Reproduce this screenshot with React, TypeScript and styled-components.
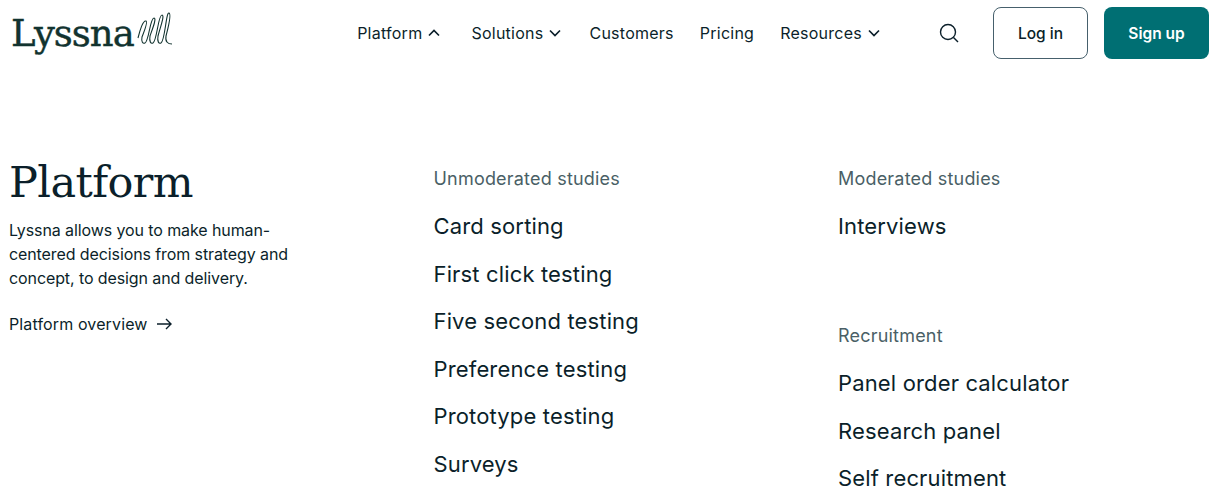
import React from "react";
import styled, { createGlobalStyle } from "styled-components";

const GlobalStyle = createGlobalStyle`
    html, body {
        margin: 0;
        padding: 0;
        height: 503px;
        overflow: hidden;
        background: #fff;
        font-family: "Inter", "Liberation Sans", sans-serif;
        color: #0b1f2a;
    }
`;

const Header = styled.header`
    height: 66px;
    display: flex;
    align-items: center;
    padding: 0 5px 0 11px;
`;

const Logo = styled.a`
    display: flex;
    align-items: center;
    width: 160px;
    color: #12332f;
    font-family: "DejaVu Serif", serif;
    font-size: 37px;
    letter-spacing: -1px;
    line-height: 1;
    -webkit-text-stroke: 0.4px #12332f;
    svg {
        margin-left: 2px;
        margin-top: -10px;
        flex: none;
    }
`;

const Nav = styled.nav`
    margin-left: auto;
    display: flex;
    align-items: center;
    gap: 26px;
`;

const NavItem = styled.a`
    display: flex;
    align-items: center;
    gap: 6px;
    font-size: 16px;
    letter-spacing: 0.25px;
    color: #0b1f2a;
    svg {
        margin-right: 2px;
    }
    &:first-child {
        margin-right: 3px;
    }
`;

const SearchButton = styled.button`
    border: 0;
    background: none;
    padding: 0;
    margin-left: 57px;
    display: flex;
    color: #0b1f2a;
`;

const Actions = styled.div`
    display: flex;
    gap: 16px;
    margin-left: 34px;
`;

const Button = styled.button<{ $primary?: boolean }>`
    height: 52px;
    border-radius: 8px;
    font-family: inherit;
    font-size: 15.5px;
    font-weight: ${(props) => (props.$primary ? 600 : 500)};
    width: ${(props) => (props.$primary ? "105px" : "95px")};
    color: ${(props) => (props.$primary ? "#fff" : "#0b1f2a")};
    background: ${(props) => (props.$primary ? "#006f73" : "#fff")};
    border: ${(props) => (props.$primary ? "0" : "1px solid #46606c")};
`;

const Main = styled.main`
    display: grid;
    grid-template-columns: 424.5px 404.5px 1fr;
    padding: 90px 0 0 9px;
`;

const Intro = styled.section`
    display: flex;
    flex-direction: column;
`;

const Title = styled.h1`
    margin: 0;
    font-family: "DejaVu Serif", serif;
    font-weight: 400;
    font-size: 43px;
    line-height: 52px;
    letter-spacing: -0.6px;
`;

const Lead = styled.p`
    margin: 10px 0 0;
    width: 290px;
    font-size: 16px;
    line-height: 24px;
    letter-spacing: -0.1px;
`;

const Overview = styled.a`
    margin-top: 22px;
    display: flex;
    align-items: center;
    gap: 9px;
    font-size: 16px;
    line-height: 24px;
    letter-spacing: 0.13px;
`;

const Column = styled.section`
    display: flex;
    flex-direction: column;
`;

const Group = styled.div`
    display: flex;
    flex-direction: column;
    & + & {
        margin-top: 62.5px;
    }
`;

const GroupTitle = styled.h2`
    margin: 11px 0 12px;
    font-size: 18px;
    font-weight: 400;
    line-height: 24px;
    letter-spacing: 0.2px;
    color: #4a5f66;
`;

const MenuLink = styled.a`
    font-size: 22px;
    line-height: 47.5px;
    letter-spacing: 0.15px;
    color: #0b1f2a;
`;

const Chevron = ({ up }: { up?: boolean }) => (
    <svg width="12" height="8" viewBox="0 0 12 8" fill="none" stroke="currentColor" strokeWidth="1.7">
        <path d={up ? "M1 6.5 6 1.5 11 6.5" : "M1 1.5 6 6.5 11 1.5"} />
    </svg>
);

const Squiggle = () => (
    <svg width="38" height="40" viewBox="4 0 38 40" fill="none" stroke="#12332f" strokeWidth="1.1">
        <path d="M6 30C8 22 11 12 14 13C16 14 12 24 10 29C9 34 11 36 13 35C17 33 18 10 22 10C25 10 20 22 18 28C17 34 19 36 21 35C25 33 26 7 30 7C33 7 28 20 26 28C25 34 27 36 29 35C33 33 34 4 37 5C40 6 36 20 34 28C33 34 36 36 40 36" />
    </svg>
);

const App: React.FC = () => {
    return (
        <>
            <GlobalStyle />
            <Header>
                <Logo>
                    Lyssna
                    <Squiggle />
                </Logo>
                <Nav>
                    <NavItem>
                        Platform <Chevron up />
                    </NavItem>
                    <NavItem>
                        Solutions <Chevron />
                    </NavItem>
                    <NavItem>Customers</NavItem>
                    <NavItem>Pricing</NavItem>
                    <NavItem>
                        Resources <Chevron />
                    </NavItem>
                </Nav>
                <SearchButton>
                    <svg width="20" height="20" viewBox="0 0 20 20" fill="none" stroke="currentColor" strokeWidth="1.4">
                        <circle cx="9" cy="9" r="7.5" />
                        <path d="M14.5 14.5 19 19" />
                    </svg>
                </SearchButton>
                <Actions>
                    <Button>Log in</Button>
                    <Button $primary>Sign up</Button>
                </Actions>
            </Header>
            <Main>
                <Intro>
                    <Title>Platform</Title>
                    <Lead>
                        Lyssna allows you to make human-centered decisions from strategy and
                        concept, to design and delivery.
                    </Lead>
                    <Overview>
                        Platform overview
                        <svg width="15" height="12" viewBox="0 0 15 12" fill="none" stroke="currentColor" strokeWidth="1.4">
                            <path d="M0 6H14M9 1 14 6 9 11" />
                        </svg>
                    </Overview>
                </Intro>
                <Column>
                    <Group>
                        <GroupTitle>Unmoderated studies</GroupTitle>
                        <MenuLink>Card sorting</MenuLink>
                        <MenuLink>First click testing</MenuLink>
                        <MenuLink>Five second testing</MenuLink>
                        <MenuLink>Preference testing</MenuLink>
                        <MenuLink>Prototype testing</MenuLink>
                        <MenuLink>Surveys</MenuLink>
                    </Group>
                </Column>
                <Column>
                    <Group>
                        <GroupTitle>Moderated studies</GroupTitle>
                        <MenuLink>Interviews</MenuLink>
                    </Group>
                    <Group>
                        <GroupTitle>Recruitment</GroupTitle>
                        <MenuLink>Panel order calculator</MenuLink>
                        <MenuLink>Research panel</MenuLink>
                        <MenuLink>Self recruitment</MenuLink>
                    </Group>
                </Column>
            </Main>
        </>
    );
};

export default App;
